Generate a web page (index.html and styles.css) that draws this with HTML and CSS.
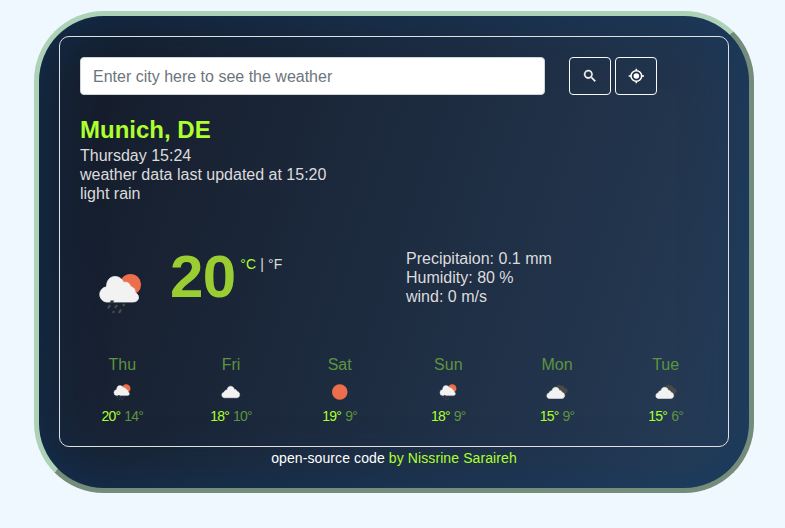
FILE: index.html
```html
<!DOCTYPE html>
<html lang="en">
<head>
<meta charset="utf-8">
<title>Weather</title>
<link rel="stylesheet" href="styles.css">
</head>
<body>
<svg class="defs" aria-hidden="true">
  <symbol id="rain" viewBox="0 0 50 50">
    <circle cx="35.500" cy="16.500" r="10.600" fill="#ec6e4c"/>
    <path d="M11 34a7.700 7.700 0 0 1 .5-15.200C11.500 12.500 15 8.500 20 8.500c4 0 7.500 2.500 8.500 6 4-1 6.500 1 7 4 3.500 1 5 3 4.500 6 5 2 5 9.500-2 9.500z" fill="#f2f2f2" stroke="#f2f2f2" stroke-width=".8"/>
    <path d="M15.500 32.500h3.500l-1 3h-3z" fill="#333"/>
    <path d="M15 37l-2 3.500M22 37l-2 3M29.500 36l-1.500 2M19 43l-1 2M26 41.500l-2 3.500" stroke="#4c4b4c" stroke-width="2.200"/>
  </symbol>
  <symbol id="cloud" viewBox="0 0 50 50">
    <path d="M12 37.500a5.600 5.600 0 0 1 .3-11c.5-3 3-5 5.700-4.500C19 16.500 22 14.500 25 14.500c4 0 6.500 2.500 7.500 6 3.500 0 5 2 5.500 4.500 7 .5 7.500 12.500-.5 12.500z" fill="#f2f2f2" stroke="#f2f2f2"/>
  </symbol>
  <symbol id="sun" viewBox="0 0 50 50">
    <circle cx="25.500" cy="26" r="15.500" fill="#ec6e4c"/>
  </symbol>
  <symbol id="broken" viewBox="0 0 50 50">
    <path d="M25 17c0-6 7-7 9-3 3-2 6 0 7 4 5 0 7 4 6 7-1 4-4 6-7 6L25 22z" fill="#4a4848"/>
    <path d="M10 39a5.600 5.600 0 0 1 .3-11c.5-3 3-5 5.700-4.500C17 18 20 16.500 23 16.500c4 0 6.500 2.500 7.500 6 3.500 0 5 2 5.500 4.500 7 .5 7.500 12-.5 12z" fill="#f2f2f2" stroke="#f2f2f2"/>
  </symbol>
</svg>
<main class="app">
  <section class="card">
    <form class="search">
      <input class="field" type="text" placeholder="Enter city here to see the weather">
      <div class="actions">
        <button class="btn" type="button" aria-label="Search"><svg width="16" height="16" viewBox="0 0 24 24"><path fill="#fff" stroke="#fff" stroke-width=".5" d="M15.500 14h-.8l-.3-.3A6.500 6.500 0 1 0 13.700 14.400l.3.300v.8l5 5 1.500-1.500zM9.500 14a4.500 4.500 0 1 1 0-9 4.500 4.500 0 0 1 0 9z"/></svg></button>
        <button class="btn" type="button" aria-label="Current location"><svg width="16" height="16" viewBox="0 0 24 24"><circle cx="12.500" cy="12" r="8" fill="none" stroke="#fff" stroke-width="2.300"/><circle cx="12.500" cy="12" r="4.200" fill="#fff"/><path d="M12.500 1v3M12.500 20v3M1 12h3.500M20.500 12h3.500" stroke="#fff" stroke-width="2.400"/></svg></button>
      </div>
    </form>
    <header class="place">
      <h1 class="city">Munich, DE</h1>
      <p>Thursday 15:24</p>
      <p>weather data last updated at 15:20</p>
      <p>light rain</p>
    </header>
    <div class="current">
      <div class="now">
        <svg class="now-icon"><use href="#rain"/></svg>
        <strong class="temp">20</strong>
        <span class="units"><a class="active">°C</a> | <a>°F</a></span>
      </div>
      <div class="details">
        <p>Precipitaion: 0.1 mm</p>
        <p>Humidity: 80 %</p>
        <p>wind: 0 m/s</p>
      </div>
    </div>
    <div class="forecast">
      <div class="day"><span>Thu</span><svg class="small"><use href="#rain"/></svg><p><b>20°</b> 14°</p></div>
      <div class="day"><span>Fri</span><svg><use href="#cloud"/></svg><p><b>18°</b> 10°</p></div>
      <div class="day"><span>Sat</span><svg><use href="#sun"/></svg><p><b>19°</b> 9°</p></div>
      <div class="day"><span>Sun</span><svg class="small"><use href="#rain"/></svg><p><b>18°</b> 9°</p></div>
      <div class="day"><span>Mon</span><svg><use href="#broken"/></svg><p><b>15°</b> 9°</p></div>
      <div class="day"><span>Tue</span><svg><use href="#broken"/></svg><p><b>15°</b> 6°</p></div>
    </div>
  </section>
  <footer class="credit"><a>open-source code</a> by Nissrine Saraireh</footer>
</main>
</body>
</html>
```
FILE: styles.css
```css
* { box-sizing: border-box; }
body {
  margin: 0;
  padding: 11px 0 0 34px;
  background: #f0f8ff;
  color: #dcdcdc;
  font: 16px/19px "Liberation Sans", Arial, sans-serif;
}
p, h1 { margin: 0; }
.defs { display: none; }
.app {
  width: 720px;
  height: 482px;
  padding: 20px;
  border: 5px solid;
  border-color: #aed2b7 #748c7a #748c7a #aed2b7;
  border-radius: 70px;
  background: linear-gradient(109deg, #161e2d 11%, #253a54 91%);
  box-shadow: inset 0 0 60px rgba(14, 60, 108, .6);
}
.card {
  height: 411px;
  padding: 20px;
  border: 1px solid #dfe0e2;
  border-radius: 10px;
}
.search { display: flex; gap: 24px; }
.field {
  width: 465px;
  height: 38px;
  padding: 7px 12px 5px;
  border: 1px solid #ced4da;
  border-radius: 4px;
  background: #fff;
  font: inherit;
}
.field::placeholder { color: #6c757d; opacity: 1; }
.actions { display: flex; gap: 4px; }
.btn {
  display: flex;
  align-items: center;
  justify-content: center;
  width: 42px;
  height: 38px;
  padding: 0;
  border: 1px solid #f8f9fa;
  border-radius: 4px;
  background: none;
}
.place { margin-top: 20px; }
.city { height: 31px; color: #adff2f; font-size: 24px; line-height: 29px; }
.current { display: flex; height: 102px; margin-top: 45px; }
.now { display: flex; width: 326px; }
.now-icon { width: 50px; height: 50px; margin: 20px 0 0 15px; }
.temp { margin-left: 25px; color: #9acd32; font-size: 60px; letter-spacing: -.7px; line-height: 58px; }
.units { margin: 7px 0 0 5px; font-size: 14px; letter-spacing: .1px; }
.units .active { color: #adff2f; }
.details { padding-top: 1px; }
.forecast { display: grid; grid-template-columns: repeat(6, 1fr); margin: 5px -12px 0; }
.day { display: flex; flex-direction: column; align-items: center; color: #5d943f; }
.day svg { width: 25px; height: 25px; margin: 5px 0; }
.day .small { width: 20px; height: 20px; margin: 8px 0 7px; }
.day p { font-size: 14px; letter-spacing: -.8px; line-height: 14px; word-spacing: 1px; }
.day b { color: #adff2f; font-weight: 400; }
.credit { color: #adff2f; font-size: 14px; letter-spacing: .1px; text-align: center; margin-top: 2px; }
.credit a { color: #fff; }
```
